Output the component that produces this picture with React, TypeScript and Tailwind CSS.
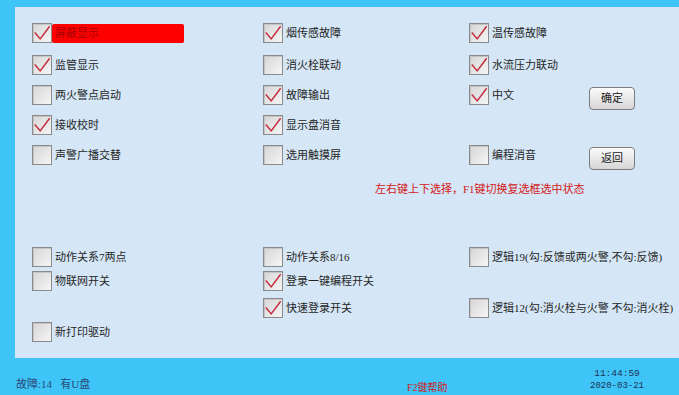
import React from "react";

const FONT = '"Liberation Serif", "Noto Sans CJK SC", serif';

function Box({ checked }: { checked?: boolean }) {
  return (
    <div className="w-[20px] h-[20px] shrink-0 border border-[#8a8a8a] bg-gradient-to-br from-[#d6d6d6] to-[#f5f5f5] shadow-[inset_1px_1px_0_#c4c4c4] flex items-center justify-center">
      {checked && (
        <svg width="20" height="20" viewBox="0 0 20 20" className="block">
          <polyline points="2,9.5 8,16.5 18.5,2.5" fill="none" stroke="#c42a3c" strokeWidth="1.6" strokeLinejoin="miter" />
        </svg>
      )}
    </div>
  );
}

function Item({ label, checked, red }: { label: string; checked?: boolean; red?: boolean }) {
  return (
    <div className="flex items-center">
      <Box checked={checked} />
      {red ? (
        <div className="w-[132px] h-[19px] bg-[#ff0000] rounded-[2px] pl-[3px] flex items-center text-[11px] text-[#a80000] whitespace-nowrap">
          {label}
        </div>
      ) : (
        <span className="ml-[3px] text-[11px] text-[#262626] whitespace-nowrap leading-[12px]">{label}</span>
      )}
    </div>
  );
}

function Btn({ label }: { label: string }) {
  return (
    <button className="w-[46px] h-[23px] mt-[2px] rounded-[4px] border border-[#7d7d7d] bg-gradient-to-b from-[#fbfbfb] to-[#d6d6d6] text-[11px] text-[#222] flex items-center justify-center">
      {label}
    </button>
  );
}

function Row({ mt, children }: { mt: string; children: React.ReactNode }) {
  return <div className={`grid grid-cols-[231px_206px_1fr] h-[21px] items-start ${mt}`}>{children}</div>;
}

export default function App() {
  return (
    <div className="w-[679px] h-[395px] overflow-hidden bg-[#3ec4f6] flex flex-col pt-[7px]" style={{ fontFamily: FONT }}>
      <div className="ml-[15px] h-[351px] bg-[#d5e6f6] pl-[17px] flex flex-col">
        <Row mt="mt-[16px]">
          <Item label="屏蔽显示" checked red />
          <Item label="烟传感故障" checked />
          <Item label="温传感故障" checked />
        </Row>
        <Row mt="mt-[11px]">
          <Item label="监管显示" checked />
          <Item label="消火栓联动" />
          <Item label="水流压力联动" checked />
        </Row>
        <Row mt="mt-[9px]">
          <Item label="两火警点启动" />
          <Item label="故障输出" checked />
          <div className="flex items-start">
            <div className="w-[120px]">
              <Item label="中文" checked />
            </div>
            <Btn label="确定" />
          </div>
        </Row>
        <Row mt="mt-[9px]">
          <Item label="接收校时" checked />
          <Item label="显示盘消音" checked />
          <div />
        </Row>
        <Row mt="mt-[9px]">
          <Item label="声警广播交替" />
          <Item label="选用触摸屏" />
          <div className="flex items-start">
            <div className="w-[120px]">
              <Item label="编程消音" />
            </div>
            <Btn label="返回" />
          </div>
        </Row>
        <div className="mt-[16px] h-[14px] pl-[343px] text-[11px] leading-[14px] text-[#d41818] whitespace-nowrap">
          左右键上下选择，F1键切换复选框选中状态
        </div>
        <Row mt="mt-[51px]">
          <Item label="动作关系7两点" />
          <Item label="动作关系8/16" />
          <Item label="逻辑19(勾:反馈或两火警,不勾:反馈)" />
        </Row>
        <Row mt="mt-[3px]">
          <Item label="物联网开关" />
          <Item label="登录一键编程开关" checked />
          <div />
        </Row>
        <Row mt="mt-[6px]">
          <div />
          <Item label="快速登录开关" checked />
          <Item label="逻辑12(勾:消火栓与火警 不勾:消火栓)" />
        </Row>
        <Row mt="mt-[3px]">
          <Item label="新打印驱动" />
          <div />
          <div />
        </Row>
      </div>
      <div className="flex-1 flex">
        <div className="w-[407px] pl-[16px] pt-[20px] text-[11px] leading-[12px] text-[#2a4a78] whitespace-nowrap">
          故障:14&nbsp;&nbsp;&nbsp;有U盘
        </div>
        <div className="w-[182px] pt-[24px] text-[10px] leading-[12px] text-[#d41818] whitespace-nowrap">F2键帮助</div>
        <div className="w-[56px] pt-[10px] flex flex-col items-center text-[10px] leading-[12px] text-[#1e3258] whitespace-nowrap" style={{ fontFamily: '"Liberation Mono", monospace' }}>
          <span className="text-[9.5px]">11:44:59</span>
          <span className="text-[9px]">2020-03-21</span>
        </div>
      </div>
    </div>
  );
}
